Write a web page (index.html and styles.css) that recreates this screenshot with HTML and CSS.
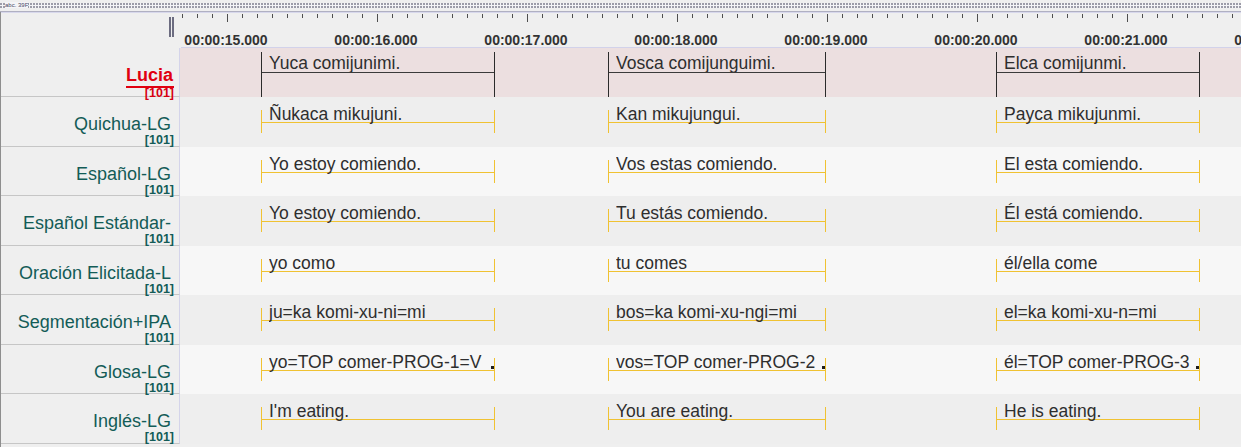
FILE: index.html
```html
<!DOCTYPE html>
<html>
<head>
<meta charset="utf-8">
<title>Timeline</title>
<link rel="stylesheet" href="styles.css">
</head>
<body>
<div class="strip"><span class="strip-text">abc. 39F</span></div>
<div class="panel">
  <div class="ruler">
    <div class="ruler-left"><div class="crosshair"></div></div>
    <div class="ruler-track">
      <div class="ticks"></div>
      <div class="times">
        <span class="time first">00:00:15.000</span>
        <span class="time">00:00:16.000</span>
        <span class="time">00:00:17.000</span>
        <span class="time">00:00:18.000</span>
        <span class="time">00:00:19.000</span>
        <span class="time">00:00:20.000</span>
        <span class="time">00:00:21.000</span>
        <span class="time">00:00:22.000</span>
      </div>
    </div>
  </div>

  <div class="row">
    <div class="label-cell">
      <div class="name main">Lucia</div>
      <div class="uline"></div>
      <div class="tag main">[101]</div>
    </div>
    <div class="track pink">
      <div class="ann sym" style="left:81px;width:234px"><span class="txt">Yuca comijunimi.</span></div>
      <div class="ann sym" style="left:428px;width:218px"><span class="txt">Vosca comijunguimi.</span></div>
      <div class="ann sym" style="left:816px;width:204px"><span class="txt">Elca comijunmi.</span></div>
    </div>
  </div>

  <div class="row">
    <div class="label-cell">
      <div class="name">Quichua-LG</div>
      <div class="tag">[101]</div>
    </div>
    <div class="track dark">
      <div class="ann dep" style="left:81px;width:234px"><div class="bar"></div><span class="txt">Ñukaca mikujuni.</span></div>
      <div class="ann dep" style="left:428px;width:218px"><div class="bar"></div><span class="txt">Kan mikujungui.</span></div>
      <div class="ann dep" style="left:816px;width:204px"><div class="bar"></div><span class="txt">Payca mikujunmi.</span></div>
    </div>
  </div>

  <div class="row">
    <div class="label-cell">
      <div class="name">Español-LG</div>
      <div class="tag">[101]</div>
    </div>
    <div class="track light">
      <div class="ann dep" style="left:81px;width:234px"><div class="bar"></div><span class="txt">Yo estoy comiendo.</span></div>
      <div class="ann dep" style="left:428px;width:218px"><div class="bar"></div><span class="txt">Vos estas comiendo.</span></div>
      <div class="ann dep" style="left:816px;width:204px"><div class="bar"></div><span class="txt">El esta comiendo.</span></div>
    </div>
  </div>

  <div class="row">
    <div class="label-cell">
      <div class="name">Español Estándar-</div>
      <div class="tag">[101]</div>
    </div>
    <div class="track dark">
      <div class="ann dep" style="left:81px;width:234px"><div class="bar"></div><span class="txt">Yo estoy comiendo.</span></div>
      <div class="ann dep" style="left:428px;width:218px"><div class="bar"></div><span class="txt">Tu estás comiendo.</span></div>
      <div class="ann dep" style="left:816px;width:204px"><div class="bar"></div><span class="txt">Él está comiendo.</span></div>
    </div>
  </div>

  <div class="row">
    <div class="label-cell">
      <div class="name">Oración Elicitada-L</div>
      <div class="tag">[101]</div>
    </div>
    <div class="track light">
      <div class="ann dep" style="left:81px;width:234px"><div class="bar"></div><span class="txt">yo como</span></div>
      <div class="ann dep" style="left:428px;width:218px"><div class="bar"></div><span class="txt">tu comes</span></div>
      <div class="ann dep" style="left:816px;width:204px"><div class="bar"></div><span class="txt">él/ella come</span></div>
    </div>
  </div>

  <div class="row">
    <div class="label-cell">
      <div class="name">Segmentación+IPA</div>
      <div class="tag">[101]</div>
    </div>
    <div class="track dark">
      <div class="ann dep" style="left:81px;width:234px"><div class="bar"></div><span class="txt">ju=ka komi-xu-ni=mi</span></div>
      <div class="ann dep" style="left:428px;width:218px"><div class="bar"></div><span class="txt">bos=ka komi-xu-ngi=mi</span></div>
      <div class="ann dep" style="left:816px;width:204px"><div class="bar"></div><span class="txt">el=ka komi-xu-n=mi</span></div>
    </div>
  </div>

  <div class="row">
    <div class="label-cell">
      <div class="name">Glosa-LG</div>
      <div class="tag">[101]</div>
    </div>
    <div class="track light">
      <div class="ann dep" style="left:81px;width:234px"><div class="bar"></div><span class="txt">yo=TOP comer-PROG-1=V</span><span class="mark"></span></div>
      <div class="ann dep" style="left:428px;width:218px"><div class="bar"></div><span class="txt">vos=TOP comer-PROG-2</span><span class="mark"></span></div>
      <div class="ann dep" style="left:816px;width:204px"><div class="bar"></div><span class="txt">él=TOP comer-PROG-3</span><span class="mark"></span></div>
    </div>
  </div>

  <div class="row">
    <div class="label-cell">
      <div class="name">Inglés-LG</div>
      <div class="tag">[101]</div>
    </div>
    <div class="track dark">
      <div class="ann dep" style="left:81px;width:234px"><div class="bar"></div><span class="txt">I'm eating.</span></div>
      <div class="ann dep" style="left:428px;width:218px"><div class="bar"></div><span class="txt">You are eating.</span></div>
      <div class="ann dep" style="left:816px;width:204px"><div class="bar"></div><span class="txt">He is eating.</span></div>
    </div>
  </div>
</div>
</body>
</html>
```

FILE: styles.css
```css
* { box-sizing: border-box; }

html, body {
  margin: 0;
  padding: 0;
}

body {
  width: 1241px;
  height: 447px;
  overflow: hidden;
  background: #efefef;
  font-family: "Liberation Sans", Arial, sans-serif;
  color: #2e2e2e;
}

/* top dotted resize strip */
.strip {
  height: 12px;
  padding: 3px 0 3px 0;
  border-bottom: 1px solid #b0b0c2;
  background-color: #f4f4f7;
  background-image:
    radial-gradient(circle at 1px 1px, #9c9ca8 0.9px, transparent 1.2px);
  background-size: 3px 3px;
  background-clip: content-box;
  background-origin: content-box;
  position: relative;
}

.strip-text {
  position: absolute;
  left: 5px;
  top: 2px;
  font-size: 6px;
  line-height: 6px;
  color: #4a4a66;
  background: #f4f4f7;
}

.panel {
  border-left: 1px solid #8e8e8e;
  height: 435px;
}

/* ruler */
.ruler {
  display: flex;
  height: 36px;
  border-top: 1px solid #d8d8ec;
}

.ruler-left {
  width: 180px;
  flex: none;
  display: flex;
  justify-content: flex-end;
  padding-right: 7px;
}

.crosshair {
  width: 5px;
  height: 20px;
  margin-top: 4px;
  border-left: 2px solid #6c6c80;
  border-right: 2px solid #6c6c80;
}

.ruler-track {
  flex: 1;
  overflow: hidden;
  border-bottom: 1px solid #d2d2ea;
}

.ticks {
  height: 8px;
  margin-top: 1px;
  margin-left: 1px;
  background-image:
    repeating-linear-gradient(90deg, #4e4e4e 0 1px, transparent 1px 15px),
    repeating-linear-gradient(90deg, transparent 0 45px, #4e4e4e 45px 46px, transparent 46px 150px);
  background-size: 100% 4px, 100% 8px;
  background-repeat: no-repeat;
}

.times {
  display: flex;
  margin-top: 11px;
  white-space: nowrap;
}

.time {
  flex: none;
  width: 150px;
  text-align: center;
  font-size: 14px;
  line-height: 14px;
  font-weight: bold;
  color: #333;
}

.time.first {
  margin-left: -30px;
}

/* tier rows */
.row {
  display: flex;
  height: 49px;
}

.row:nth-child(odd) {
  height: 50px;
}

.label-cell {
  width: 179px;
  flex: none;
  border-right: 1px solid #d4d4ea;
  border-bottom: 1px solid #c6c6c6;
  display: flex;
  flex-direction: column;
  align-items: flex-end;
  padding-top: 18px;
  white-space: nowrap;
}

.label-cell > * {
  flex: none;
}

.name {
  font-size: 18px;
  line-height: 18px;
  color: #135c57;
  margin-right: 8px;
}

.name.main {
  color: #e00010;
  font-weight: bold;
  margin-right: 6px;
}

.uline {
  width: 48px;
  height: 2px;
  margin-top: 2px;
  margin-right: 5px;
  background: #e00010;
}

.tag {
  font-size: 12.5px;
  line-height: 12px;
  font-weight: bold;
  color: #135c57;
  margin-top: 1px;
  margin-right: 5px;
}

.tag.main {
  color: #d80010;
  margin-top: -1px;
  position: relative;
}

.track {
  flex: 1;
  position: relative;
  overflow: hidden;
}

.track.pink { background: #ecdfe0; }
.track.dark { background: #eeeeee; }
.track.light { background: #f7f7f7; }

/* annotations */
.ann {
  position: absolute;
  top: 0;
  bottom: 0;
}

.ann .txt {
  position: absolute;
  left: 8px;
  right: 4px;
  top: 5px;
  font-size: 17.5px;
  line-height: 24px;
  white-space: nowrap;
  overflow: hidden;
  color: #2e2e2e;
}

.ann.sym {
  top: 4px;
  border-left: 1px solid #2b2b2b;
  border-right: 1px solid #2b2b2b;
}

.ann.sym::after {
  content: "";
  position: absolute;
  left: 0;
  right: 0;
  top: 20px;
  height: 1px;
  background: #3a3a3a;
}

.ann.sym .txt {
  left: 7px;
  top: -1px;
}

.ann .bar {
  position: absolute;
  left: 0;
  right: 0;
  top: 13px;
  height: 23px;
  border-left: 1px solid #f0c232;
  border-right: 1px solid #f0c232;
}

.ann .bar::after {
  content: "";
  position: absolute;
  left: 0;
  right: 0;
  top: 12px;
  height: 1px;
  background: #f0c232;
}

.ann .mark {
  position: absolute;
  right: 1px;
  top: 21px;
  width: 3px;
  height: 3px;
  background: #1e1e1e;
}
```
